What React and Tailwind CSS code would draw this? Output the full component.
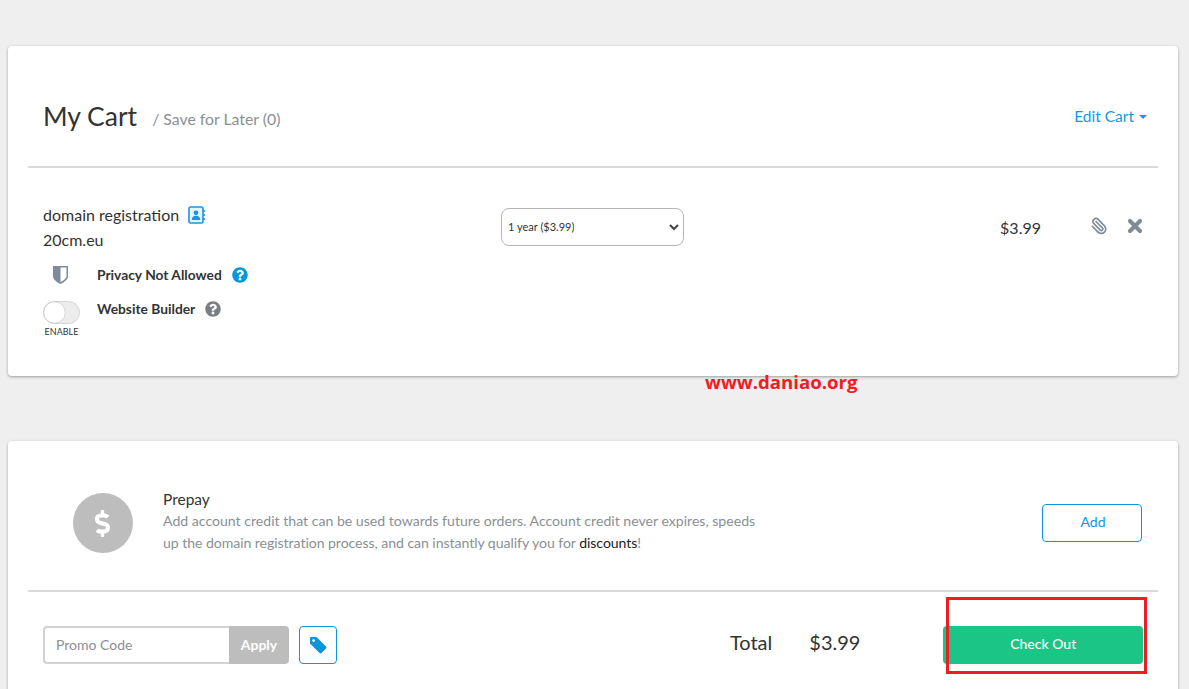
import React from 'react'
import { FaQuestionCircle, FaDollarSign } from 'react-icons/fa'

function ContactBook() {
  return (
    <svg width="18" height="18" viewBox="0 0 18 18" className="text-[#1b95e0]">
      <rect x="1" y="1" width="14" height="16" rx="1.5" fill="#e6f3fb" stroke="currentColor" strokeWidth="1.6" />
      <circle cx="8" cy="6.8" r="2.4" fill="currentColor" />
      <path d="M3.8 14c0-3 1.8-4.2 4.2-4.2s4.2 1.2 4.2 4.2z" fill="currentColor" />
      <path d="M16 4v2M16 8v2M16 12v2" stroke="currentColor" strokeWidth="1.6" />
    </svg>
  )
}

function Shield() {
  return (
    <svg width="17" height="20" viewBox="0 0 16 20">
      <path d="M0.5 1h15v9.5c0 4-3.5 6.800-7.500 8.500C4 17.300 0.500 14.500 0.500 10.500z" fill="#7f8b99" />
      <path d="M8 2.500h6v8c0 3-2.800 5-6 6.500z" fill="#ffffff" />
    </svg>
  )
}

function Clip() {
  return (
    <svg width="18" height="18" viewBox="0 0 24 24" fill="none" stroke="#7f8b99" strokeWidth="2.2" strokeLinecap="round" strokeLinejoin="round" className="-scale-x-100">
      <path d="M13.234 20.252 21 12.3" />
      <path d="m16 6-8.414 8.586a2 2 0 0 0 0 2.828 2 2 0 0 0 2.828 0l8.414-8.586a4 4 0 0 0 0-5.656 4 4 0 0 0-5.656 0l-8.415 8.585a6 6 0 1 0 8.486 8.486" />
    </svg>
  )
}

function Cross() {
  return (
    <svg width="16" height="16" viewBox="0 0 16 16" className="mt-[1px]">
      <path d="M3 3l10 10M13 3L3 13" stroke="#7f8b99" strokeWidth="4.200" strokeLinecap="round" />
    </svg>
  )
}

function Tag() {
  return (
    <svg width="18" height="18" viewBox="0 0 18 18">
      <path d="M2 1h5.500l9.500 9.500a1.500 1.500 0 0 1 0 2L12.500 17a1.500 1.500 0 0 1-2 0L1 7.500V2a1 1 0 0 1 1-1z" fill="#0b96dc" />
      <circle cx="4.600" cy="4.600" r="1.400" fill="#fff" />
    </svg>
  )
}

function App() {
  return (
    <div className="h-[689px] overflow-hidden bg-[#efefef] relative text-[#333] font-['Lato','Open_Sans',sans-serif]">
      {/* cart card */}
      <div className="mx-2 mt-[46px] w-[1170px] h-[330px] bg-white rounded shadow-[0_1px_3px_rgba(0,0,0,0.35)] px-5">
        <div className="h-[122px] border-b-2 border-[#d9d9d9] px-[15px] flex items-start justify-between pt-[52px]">
          <div className="flex items-baseline">
            <h1 className="text-[26.5px] leading-9 text-[#333]">My Cart</h1>
            <span className="ml-[15px] -translate-y-px text-[15.8px] text-[#8a8f94]">/ Save for Later (0)</span>
          </div>
          <div className="flex items-center gap-[5px] mt-[7px] mr-[-4px] text-[15.5px] text-[#1b95e0]">
            Edit Cart
            <span className="w-0 h-0 border-x-[4px] border-x-transparent border-t-[4px] border-t-[#1b95e0]" />
          </div>
        </div>

        <div className="flex px-[15px]">
          <div className="w-[458px] pt-[35px]">
            <div className="flex items-center h-6 text-[16px]">
              domain registration
              <span className="ml-[9px]"><ContactBook /></span>
            </div>
            <div className="h-6 mt-[1px] text-[16px] leading-6">20cm.eu</div>
            <div className="flex items-center mt-[11px] h-6">
              <span className="w-[35px] flex justify-center"><Shield /></span>
              <span className="ml-[19px] text-[13.8px] font-bold text-[#333]">Privacy Not Allowed</span>
              <FaQuestionCircle className="ml-[10px] text-[#0b96dc] text-[16px]" />
            </div>
            <div className="flex items-start mt-[14px]">
              <div className="w-[37px] flex flex-col items-center">
                <div className="w-[37px] h-[23px] rounded-full border border-[#d5d5d5] bg-[#ececec] relative">
                  <div className="absolute left-0 top-0 w-[21px] h-[21px] rounded-full bg-white shadow-[0_0_1px_rgba(0,0,0,0.4)]" />
                </div>
                <span className="mt-[2px] text-[9px] leading-3 text-[#333]">ENABLE</span>
              </div>
              <span className="ml-[17px] -mt-[2px] text-[13.8px] font-bold text-[#333]">Website Builder</span>
              <FaQuestionCircle className="ml-[10px] text-[#7b7f85] text-[16px]" />
            </div>
          </div>

          <div className="pt-[40px]">
            <div className="ml-[3px] w-[183px] h-[38px] border border-[#b5b5b5] rounded-lg flex items-center justify-between pl-[6px] pr-[4px] text-[11px] text-[#333]">
              1 year ($3.99)
              <svg width="10" height="7" viewBox="0 0 10 7"><path d="M1 1l4 4 4-4" fill="none" stroke="#444" strokeWidth="2" /></svg>
            </div>
          </div>

          <div className="ml-[316px] pt-[50px] text-[16px] leading-5 w-[41px]">$3.99</div>

          <div className="ml-[49px] pt-[49px] flex gap-[19px] h-fit">
            <Clip />
            <Cross />
          </div>
        </div>
      </div>

      {/* prepay + checkout card */}
      <div className="mx-2 mt-[65px] w-[1170px] h-[300px] bg-white rounded shadow-[0_1px_3px_rgba(0,0,0,0.35)] px-5">
        <div className="h-[151px] border-b-2 border-[#d9d9d9] flex items-start">
          <div className="ml-[45px] mt-[52px] w-[60px] h-[60px] rounded-full bg-[#bdbdbd] flex items-center justify-center shrink-0">
            <FaDollarSign className="text-white text-[27px] -translate-x-px" />
          </div>
          <div className="ml-[30px] mt-[47px] w-[600px] shrink-0">
            <div className="text-[15.500px] leading-[22px] text-[#333]">Prepay</div>
            <p className="text-[14.100px] leading-[22px] text-[#8a8f94]">
              Add account credit that can be used towards future orders. Account credit never expires, speeds
              <span className="block tracking-[-0.06px]">up the domain registration process, and can instantly qualify you for <span className="text-[#222]">discounts</span>!</span>
            </p>
          </div>
          <button className="ml-[279px] mt-[63px] w-[100px] h-[38px] border border-[#0b96dc] rounded text-[14px] text-[#0b96dc] shrink-0 pb-[3px] pl-[2px]">Add</button>
        </div>

        <div className="flex items-center pt-[34px] px-[15px]">
          <div className="flex h-[38px] w-[246px]">
            <div className="w-[186px] border-2 border-r-0 border-[#d3d3d3] rounded-l pl-[11px] pb-[2px] flex items-center text-[14px] text-[#8a8f94]">Promo Code</div>
            <div className="w-[60px] bg-[#bdbdbd] rounded-r text-white text-[14px] font-bold pb-[2px] flex items-center justify-center">Apply</div>
          </div>
          <button className="ml-[10px] w-[38px] h-[38px] border border-[#0b96dc] rounded flex items-center justify-center">
            <Tag />
          </button>
          <span className="ml-[393px] -mt-[7px] text-[20px] text-[#333]">Total</span>
          <span className="ml-[37px] -mt-[7px] text-[20px] text-[#333]">$3.99</span>
          <button className="ml-[83px] w-[200px] h-[38px] bg-[#1bc585] rounded text-white text-[14px] font-medium pb-[4px]">Check Out</button>
        </div>
      </div>

      {/* annotations on top of the screenshot */}
      <div className="absolute left-[705px] top-[370px] text-[18.600px] leading-6 font-bold text-[#ee1c25] font-['Open_Sans',sans-serif]">www.daniao.org</div>
      <div className="absolute left-[946px] top-[597px] w-[201px] h-[77px] border-[3px] border-[#ee1c25]" />
    </div>
  )
}

export default App
